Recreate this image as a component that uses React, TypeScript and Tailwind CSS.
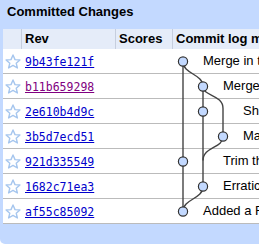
import * as React from "react";

type Row = { rev: string; visited?: boolean; msg: string; indent: number };

const ROWS: Row[] = [
  { rev: "9b43fe121f", msg: "Merge in the latest changes", indent: 30 },
  { rev: "b11b659298", visited: true, msg: "Merge branch", indent: 50 },
  { rev: "2e610b4d9c", msg: "Show the graph", indent: 70 },
  { rev: "3b5d7ecd51", msg: "Make it work", indent: 70 },
  { rev: "921d335549", msg: "Trim the fat", indent: 50 },
  { rev: "1682c71ea3", msg: "Erratic behaviour fix", indent: 50 },
  { rev: "af55c85092", msg: "Added a README", indent: 30 },
];

// lane x / row center inside the graph overlay
const lx = (l: number) => 10 + l * 20;
const ry = (r: number) => 12.5 + r * 25;

const NODES: [number, number][] = [
  [0, 0],
  [1, 1],
  [1, 2],
  [2, 3],
  [0, 4],
  [1, 5],
  [0, 6],
];

function Star() {
  return (
    <svg width="16" height="15" viewBox="0 0 16 15" className="block">
      <polygon
        points="8,1 10,5.6 14.9,6 11.2,9.2 12.4,14 8,11.4 3.6,14 4.8,9.2 1.1,6 6,5.6"
        fill="#ffffff"
        stroke="#a6c6ee"
        strokeWidth="1.4"
        strokeLinejoin="round"
      />
    </svg>
  );
}

function Graph() {
  const edge = "#444444";
  return (
    <svg
      width="80"
      height="175"
      viewBox="0 0 80 175"
      className="pointer-events-none absolute left-[170px] top-0"
    >
      <g fill="none" stroke={edge} strokeWidth="1.4">
        <path d={`M${lx(0)} ${ry(0)} V${ry(6)}`} />
        <path d={`M${lx(0)} ${ry(0)} C${lx(0)} ${ry(0) + 13} ${lx(1)} ${ry(1) - 13} ${lx(1)} ${ry(1)}`} />
        <path d={`M${lx(1)} ${ry(1)} V${ry(5)}`} />
        <path d={`M${lx(1)} ${ry(1)} C${lx(1)} ${ry(1) + 10} ${lx(2)} ${ry(1) + 8} ${lx(2)} ${ry(1) + 22} V${ry(3)}`} />
        <path d={`M${lx(2)} ${ry(3)} C${lx(2)} ${ry(3) + 12} ${lx(1)} ${ry(3) + 10} ${lx(1)} ${ry(3) + 24}`} />
        <path d={`M${lx(1)} ${ry(5)} C${lx(1)} ${ry(5) + 13} ${lx(0)} ${ry(6) - 13} ${lx(0)} ${ry(6)}`} />
      </g>
      {NODES.map(([l, r]) => (
        <circle key={r} cx={lx(l)} cy={ry(r)} r="4.6" fill="#c3d9ff" stroke="#333333" strokeWidth="1.2" />
      ))}
    </svg>
  );
}

export default function App() {
  return (
    <div
      className="h-[244px] w-[259px] overflow-hidden rounded-bl-[5px] bg-[#c3d9ff] text-black"
      style={{ fontFamily: '"Liberation Sans", Arial, sans-serif' }}
    >
      <div className="h-[29px] whitespace-nowrap pl-[7px] pt-[4px] text-[13px] font-bold leading-[16px]">
        Committed Changes
      </div>
      <div className="ml-[3px] w-[400px] bg-white">
        <div className="flex h-[20px] bg-[#e5ecf9] text-[13px] font-bold leading-[20px]">
          <div className="w-[19px] border-r border-[#c6cede]" />
          <div className="w-[94px] border-r border-[#c6cede] pl-[3px]">Rev</div>
          <div className="w-[57px] border-r border-[#c6cede] pl-[3px]">Scores</div>
          <div className="flex-1 whitespace-nowrap pl-[3px]">Commit log message</div>
        </div>
        <div className="relative">
          {ROWS.map((r) => (
            <div key={r.rev} className="flex h-[25px] items-center border-b border-[#bbbbbb]">
              <div className="flex w-[19px] justify-center">
                <Star />
              </div>
              <div className="w-[94px] pl-[3px]">
                <span
                  className={`text-[11.5px] underline ${r.visited ? "text-[#800080]" : "text-[#0000cc]"}`}
                  style={{ fontFamily: '"DejaVu Sans Mono", monospace' }}
                >
                  {r.rev}
                </span>
              </div>
              <div className="w-[57px]" />
              <div className="flex-1 whitespace-nowrap text-[13px]" style={{ paddingLeft: r.indent }}>
                {r.msg}
              </div>
            </div>
          ))}
          <Graph />
        </div>
      </div>
    </div>
  );
}
